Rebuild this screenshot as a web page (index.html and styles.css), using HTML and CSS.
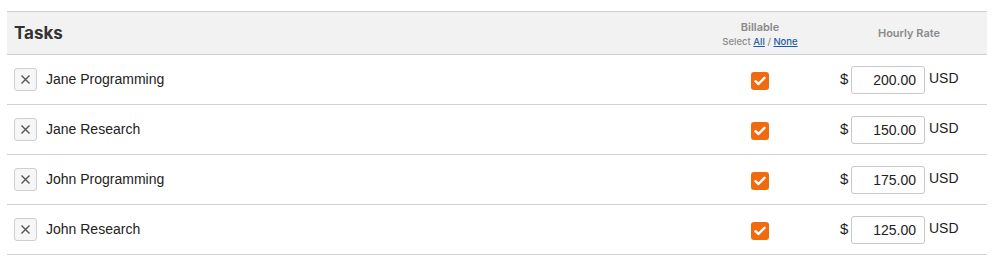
FILE: index.html
```html
<!DOCTYPE html>
<html>
<head>
<meta charset="utf-8">
<link rel="stylesheet" href="styles.css">
</head>
<body>
<div class="table">
  <div class="head">
    <div class="h-name">Tasks</div>
    <div class="h-bill">
      <div class="h-bill-title">Billable</div>
      <div class="h-bill-sel">Select <a href="#">All</a> / <a href="#">None</a></div>
    </div>
    <div class="h-rate">Hourly Rate</div>
  </div>

  <div class="row">
    <div class="c-name"><span class="xbtn"><svg width="11" height="11" viewBox="0 0 11 11"><path d="M1.5 1.5 L9.5 9.5 M9.5 1.5 L1.5 9.5" stroke="#555" stroke-width="1.4" fill="none"/></svg></span><span class="tname">Jane Programming</span></div>
    <div class="c-bill"><span class="cb"><svg width="12" height="10" viewBox="0 0 12 10"><path d="M1.5 5.2 L4.5 8 L10.5 1.8" stroke="#fff" stroke-width="2.4" fill="none" stroke-linecap="round" stroke-linejoin="round"/></svg></span></div>
    <div class="c-rate"><span class="cur">$</span><span class="inp">200.00</span><span class="usd">USD</span></div>
  </div>

  <div class="row">
    <div class="c-name"><span class="xbtn"><svg width="11" height="11" viewBox="0 0 11 11"><path d="M1.5 1.5 L9.5 9.5 M9.5 1.5 L1.5 9.5" stroke="#555" stroke-width="1.4" fill="none"/></svg></span><span class="tname">Jane Research</span></div>
    <div class="c-bill"><span class="cb"><svg width="12" height="10" viewBox="0 0 12 10"><path d="M1.5 5.2 L4.5 8 L10.5 1.8" stroke="#fff" stroke-width="2.4" fill="none" stroke-linecap="round" stroke-linejoin="round"/></svg></span></div>
    <div class="c-rate"><span class="cur">$</span><span class="inp">150.00</span><span class="usd">USD</span></div>
  </div>

  <div class="row">
    <div class="c-name"><span class="xbtn"><svg width="11" height="11" viewBox="0 0 11 11"><path d="M1.5 1.5 L9.5 9.5 M9.5 1.5 L1.5 9.5" stroke="#555" stroke-width="1.4" fill="none"/></svg></span><span class="tname">John Programming</span></div>
    <div class="c-bill"><span class="cb"><svg width="12" height="10" viewBox="0 0 12 10"><path d="M1.5 5.2 L4.5 8 L10.5 1.8" stroke="#fff" stroke-width="2.4" fill="none" stroke-linecap="round" stroke-linejoin="round"/></svg></span></div>
    <div class="c-rate"><span class="cur">$</span><span class="inp">175.00</span><span class="usd">USD</span></div>
  </div>

  <div class="row">
    <div class="c-name"><span class="xbtn"><svg width="11" height="11" viewBox="0 0 11 11"><path d="M1.5 1.5 L9.5 9.5 M9.5 1.5 L1.5 9.5" stroke="#555" stroke-width="1.4" fill="none"/></svg></span><span class="tname">John Research</span></div>
    <div class="c-bill"><span class="cb"><svg width="12" height="10" viewBox="0 0 12 10"><path d="M1.5 5.2 L4.5 8 L10.5 1.8" stroke="#fff" stroke-width="2.4" fill="none" stroke-linecap="round" stroke-linejoin="round"/></svg></span></div>
    <div class="c-rate"><span class="cur">$</span><span class="inp">125.00</span><span class="usd">USD</span></div>
  </div>
</div>
</body>
</html>
```

FILE: styles.css
```css
html, body {
  margin: 0;
  padding: 0;
  background: #fff;
}
body {
  padding: 11px 9px 0 7px;
  font-family: "Liberation Sans", Arial, sans-serif;
  color: #1d1d1d;
}
.table {
  width: 980px;
}
.head, .row {
  display: grid;
  grid-template-columns: 1fr 148px 152px;
  align-items: center;
}
.head {
  height: 42px;
  background: #f2f2f2;
  border-top: 1px solid #cfcfcf;
  border-bottom: 1px solid #cfcfcf;
}
.h-name {
  padding-left: 7px;
  font-family: Inter, "Noto Sans", sans-serif;
  font-weight: 700;
  font-size: 17px;
  color: #333;
}
.h-bill {
  text-align: center;
  font-family: Inter, "Noto Sans", sans-serif;
  color: #8a8a8a;
  padding-top: 1px;
  padding-right: 2px;
}
.h-bill-title {
  font-size: 11px;
  font-weight: 600;
  line-height: 14px;
}
.h-bill-sel {
  font-size: 9.5px;
  font-weight: 500;
  line-height: 13px;
  margin-top: 1px;
}
.h-bill-sel a {
  color: #1e5ba3;
  text-decoration: underline;
}
.h-rate {
  text-align: center;
  font-family: Inter, "Noto Sans", sans-serif;
  font-size: 11px;
  font-weight: 600;
  color: #8a8a8a;
  padding-right: 4px;
}
.row {
  height: 49px;
  border-bottom: 1px solid #d2d2d2;
}
.c-name {
  display: flex;
  align-items: center;
  padding-left: 7px;
  margin-top: -1px;
}
.xbtn {
  width: 21px;
  height: 21px;
  border: 1px solid #cfcfcf;
  border-radius: 3px;
  background: #f6f6f6;
  display: flex;
  align-items: center;
  justify-content: center;
}
.tname {
  margin-left: 9px;
  font-size: 14px;
  color: #222;
}
.c-bill {
  display: flex;
  justify-content: center;
  padding-right: 2px;
  margin-top: 2px;
}
.cb {
  width: 18px;
  height: 18px;
  border-radius: 3px;
  background: #f06a0e;
  display: flex;
  align-items: center;
  justify-content: center;
}
.c-rate {
  display: flex;
  align-items: center;
  padding-left: 5px;
  font-size: 14px;
  margin-top: -1px;
}
.cur {
  width: 11px;
  font-size: 15px;
  margin-top: -2px;
}
.inp {
  width: 64px;
  height: 26px;
  border: 1px solid #c8c8c8;
  border-radius: 3px;
  padding-right: 8px;
  display: flex;
  align-items: center;
  justify-content: flex-end;
  color: #222;
  margin-top: 2px;
}
.usd {
  margin-left: 4px;
  margin-top: -3px;
}
```
